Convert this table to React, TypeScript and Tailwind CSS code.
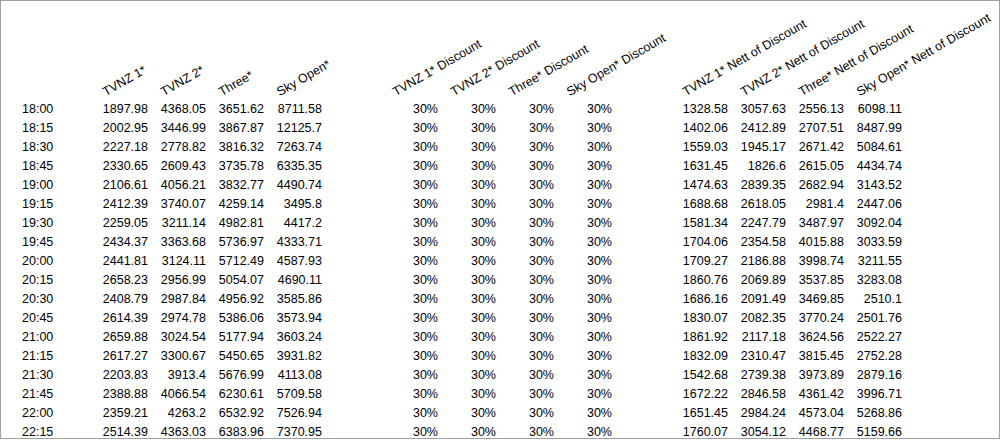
import React from "react";

const rows: [string, string[], string[]][] = [
  ["18:00", ["1897.98", "4368.05", "3651.62", "8711.58"], ["1328.58", "3057.63", "2556.13", "6098.11"]],
  ["18:15", ["2002.95", "3446.99", "3867.87", "12125.7"], ["1402.06", "2412.89", "2707.51", "8487.99"]],
  ["18:30", ["2227.18", "2778.82", "3816.32", "7263.74"], ["1559.03", "1945.17", "2671.42", "5084.61"]],
  ["18:45", ["2330.65", "2609.43", "3735.78", "6335.35"], ["1631.45", "1826.6", "2615.05", "4434.74"]],
  ["19:00", ["2106.61", "4056.21", "3832.77", "4490.74"], ["1474.63", "2839.35", "2682.94", "3143.52"]],
  ["19:15", ["2412.39", "3740.07", "4259.14", "3495.8"], ["1688.68", "2618.05", "2981.4", "2447.06"]],
  ["19:30", ["2259.05", "3211.14", "4982.81", "4417.2"], ["1581.34", "2247.79", "3487.97", "3092.04"]],
  ["19:45", ["2434.37", "3363.68", "5736.97", "4333.71"], ["1704.06", "2354.58", "4015.88", "3033.59"]],
  ["20:00", ["2441.81", "3124.11", "5712.49", "4587.93"], ["1709.27", "2186.88", "3998.74", "3211.55"]],
  ["20:15", ["2658.23", "2956.99", "5054.07", "4690.11"], ["1860.76", "2069.89", "3537.85", "3283.08"]],
  ["20:30", ["2408.79", "2987.84", "4956.92", "3585.86"], ["1686.16", "2091.49", "3469.85", "2510.1"]],
  ["20:45", ["2614.39", "2974.78", "5386.06", "3573.94"], ["1830.07", "2082.35", "3770.24", "2501.76"]],
  ["21:00", ["2659.88", "3024.54", "5177.94", "3603.24"], ["1861.92", "2117.18", "3624.56", "2522.27"]],
  ["21:15", ["2617.27", "3300.67", "5450.65", "3931.82"], ["1832.09", "2310.47", "3815.45", "2752.28"]],
  ["21:30", ["2203.83", "3913.4", "5676.99", "4113.08"], ["1542.68", "2739.38", "3973.89", "2879.16"]],
  ["21:45", ["2388.88", "4066.54", "6230.61", "5709.58"], ["1672.22", "2846.58", "4361.42", "3996.71"]],
  ["22:00", ["2359.21", "4263.2", "6532.92", "7526.94"], ["1651.45", "2984.24", "4573.04", "5268.86"]],
  ["22:15", ["2514.39", "4363.03", "6383.96", "7370.95"], ["1760.07", "3054.12", "4468.77", "5159.66"]],
];

const ch = ["TVNZ 1*", "TVNZ 2*", "Three*", "Sky Open*"];

function Head({ label }: { label: string }) {
  return (
    <div className="w-[58px] shrink-0 flex items-end pl-[15px] pb-[2px]">
      <span className="block whitespace-nowrap leading-none origin-bottom-left -rotate-30">{label}</span>
    </div>
  );
}

function Num({ v }: { v: string }) {
  return <div className="w-[58px] shrink-0 text-right pr-[2px]">{v}</div>;
}

function Gap() {
  return <div className="w-[58px] shrink-0" />;
}

export default function App() {
  return (
    <div
      className="w-[1000px] h-[439px] border border-[#a0a0a0] bg-white overflow-hidden text-black text-[12.5px]"
      style={{ fontFamily: '"Liberation Sans", Arial, sans-serif' }}
    >
      <div className="pl-[19px]">
        <div className="flex h-[99px]">
          <div className="w-[72px] shrink-0" />
          {ch.map((c) => (
            <Head key={c} label={c} />
          ))}
          <Gap />
          {ch.map((c) => (
            <Head key={c + "d"} label={c + " Discount"} />
          ))}
          <Gap />
          {ch.map((c) => (
            <Head key={c + "n"} label={c + " Nett of Discount"} />
          ))}
        </div>
        {rows.map(([t, a, b]) => (
          <div key={t} className="flex h-[19px] leading-[19px]">
            <div className="w-[72px] shrink-0 pl-[2px]">{t}</div>
            {a.map((v, i) => (
              <Num key={i} v={v} />
            ))}
            <Gap />
            {a.map((_, i) => (
              <Num key={i} v="30%" />
            ))}
            <Gap />
            {b.map((v, i) => (
              <Num key={i} v={v} />
            ))}
          </div>
        ))}
      </div>
    </div>
  );
}
